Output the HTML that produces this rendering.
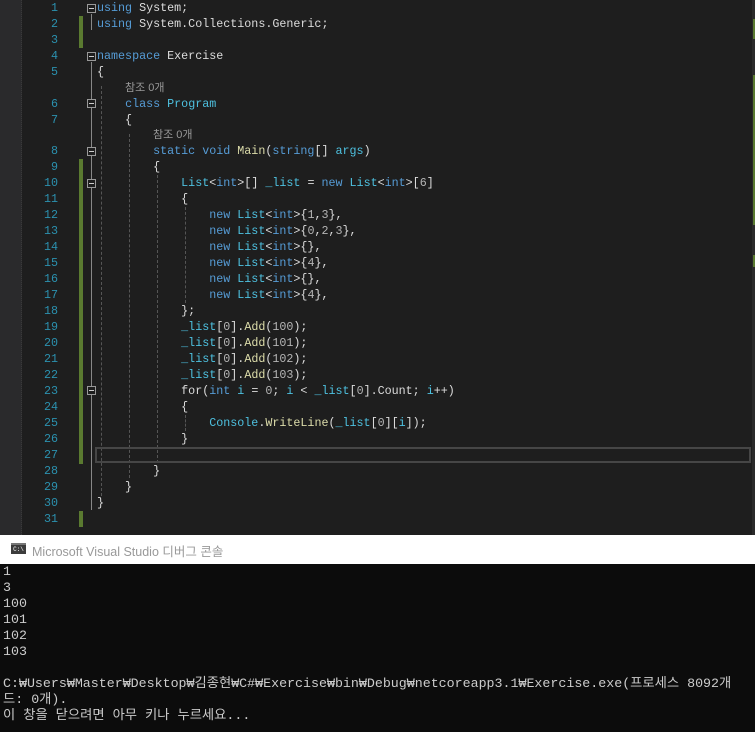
<!DOCTYPE html>
<html><head><meta charset="utf-8"><style>
*{margin:0;padding:0;box-sizing:border-box}
body{width:755px;height:732px;overflow:hidden;background:#1e1e1e;position:relative;font-family:"Liberation Mono","Noto Sans CJK KR",monospace}
#ed{position:absolute;left:0;top:0;width:755px;height:535px;background:#1e1e1e}
#lm{position:absolute;left:0;top:0;width:22px;height:535px;background:#2a2a2c;border-right:1px dotted #3a3a3a}
.l{position:absolute;left:0;height:16px;line-height:16px;font-size:11.7px;white-space:pre;color:#dcdcdc}
.n{position:absolute;width:58px;text-align:right;color:#2b91af;height:16px;line-height:16px;font-size:11.7px}
.t{position:absolute;left:97px;height:16px;line-height:16px;font-size:11.7px;white-space:pre;color:#dcdcdc}
.k{color:#569cd6}.ty{color:#4ec1e0}.m{color:#dcdcaa}.g{color:#b5b5b5}
.lens{color:#999;font-family:"Liberation Sans","Noto Sans CJK KR",sans-serif;font-size:11px}
.bar{position:absolute;left:79px;width:4px;background:#5a7a30}
.box{position:absolute;left:87px;width:9px;height:9px;border:1px solid #999;background:#1e1e1e}
.box:after{content:"";position:absolute;left:1px;top:3px;width:5px;height:1px;background:#ccc}
.vl{position:absolute;width:1px;background:#888}
.ig{position:absolute;width:0;border-left:1px dashed #555}
#con{position:absolute;left:0;top:535px;width:755px;height:197px;background:#0c0c0c}
#tb{position:absolute;left:0;top:0;width:755px;height:29px;background:#fff}
#tb span{position:absolute;left:32px;top:6px;font-family:"Liberation Sans","Noto Sans CJK KR",sans-serif;font-size:12.5px;color:#999}
#ico{position:absolute;left:11px;top:8px;width:15px;height:11px;background:#3c3c3c;border-top:2px solid #777;color:#fff;font-size:6px;line-height:9px;text-align:center}
.c{position:absolute;left:3px;height:16px;line-height:16px;font-size:13.3px;color:#ccc;white-space:pre}
</style></head><body>
<div id="ed">
<div id="lm"></div>
<div class="bar" style="top:16px;height:32px"></div>
<div class="bar" style="top:159px;height:305px"></div>
<div class="bar" style="top:511px;height:16px"></div>
<div style="position:absolute;left:752px;top:0;width:3px;height:535px;background:#2a2a2a"></div>
<div style="position:absolute;left:753px;top:19px;width:2px;height:20px;background:#5a7a30"></div>
<div style="position:absolute;left:753px;top:75px;width:2px;height:150px;background:#5a7a30"></div>
<div style="position:absolute;left:753px;top:255px;width:2px;height:12px;background:#5a7a30"></div>
<!-- outline lines -->
<div class="vl" style="left:91px;top:14px;height:16px"></div>
<div class="vl" style="left:91px;top:62px;height:448px"></div>
<div class="ig" style="left:101px;top:86px;height:410px"></div>
<div class="ig" style="left:129px;top:134px;height:344px"></div>
<div class="ig" style="left:157px;top:175px;height:288px"></div>
<div class="ig" style="left:185px;top:207px;height:96px"></div>
<div class="ig" style="left:185px;top:415px;height:16px"></div>
<div class="box" style="top:4px"></div>
<div class="box" style="top:52px"></div>
<div class="box" style="top:99px"></div>
<div class="box" style="top:147px"></div>
<div class="box" style="top:179px"></div>
<div class="box" style="top:386px"></div>
<div style="position:absolute;left:95px;top:447px;width:656px;height:16px;border:2px solid #464646"></div>

<div class="n" style="top:0">1</div><div class="t" style="top:0"><span class="k">using</span> System;</div>
<div class="n" style="top:16px">2</div><div class="t" style="top:16px"><span class="k">using</span> System.Collections.Generic;</div>
<div class="n" style="top:32px">3</div>
<div class="n" style="top:48px">4</div><div class="t" style="top:48px"><span class="k">namespace</span> Exercise</div>
<div class="n" style="top:64px">5</div><div class="t" style="top:64px">{</div>
<div class="t lens" style="top:80px;left:125px">참조 0개</div>
<div class="n" style="top:96px">6</div><div class="t" style="top:96px">    <span class="k">class</span> <span class="ty">Program</span></div>
<div class="n" style="top:112px">7</div><div class="t" style="top:112px">    {</div>
<div class="t lens" style="top:127px;left:153px">참조 0개</div>
<div class="n" style="top:143px">8</div><div class="t" style="top:143px">        <span class="k">static void</span> <span class="m">Main</span>(<span class="k">string</span>[] <span class="ty">args</span>)</div>
<div class="n" style="top:159px">9</div><div class="t" style="top:159px">        {</div>
<div class="n" style="top:175px">10</div><div class="t" style="top:175px">            <span class="ty">List</span>&lt;<span class="k">int</span>&gt;[] <span class="ty">_list</span> = <span class="k">new</span> <span class="ty">List</span>&lt;<span class="k">int</span>&gt;[<span class="g">6</span>]</div>
<div class="n" style="top:191px">11</div><div class="t" style="top:191px">            {</div>
<div class="n" style="top:207px">12</div><div class="t" style="top:207px">                <span class="k">new</span> <span class="ty">List</span>&lt;<span class="k">int</span>&gt;{<span class="g">1</span>,<span class="g">3</span>},</div>
<div class="n" style="top:223px">13</div><div class="t" style="top:223px">                <span class="k">new</span> <span class="ty">List</span>&lt;<span class="k">int</span>&gt;{<span class="g">0</span>,<span class="g">2</span>,<span class="g">3</span>},</div>
<div class="n" style="top:239px">14</div><div class="t" style="top:239px">                <span class="k">new</span> <span class="ty">List</span>&lt;<span class="k">int</span>&gt;{},</div>
<div class="n" style="top:255px">15</div><div class="t" style="top:255px">                <span class="k">new</span> <span class="ty">List</span>&lt;<span class="k">int</span>&gt;{<span class="g">4</span>},</div>
<div class="n" style="top:271px">16</div><div class="t" style="top:271px">                <span class="k">new</span> <span class="ty">List</span>&lt;<span class="k">int</span>&gt;{},</div>
<div class="n" style="top:287px">17</div><div class="t" style="top:287px">                <span class="k">new</span> <span class="ty">List</span>&lt;<span class="k">int</span>&gt;{<span class="g">4</span>},</div>
<div class="n" style="top:303px">18</div><div class="t" style="top:303px">            };</div>
<div class="n" style="top:319px">19</div><div class="t" style="top:319px">            <span class="ty">_list</span>[<span class="g">0</span>].<span class="m">Add</span>(<span class="g">100</span>);</div>
<div class="n" style="top:335px">20</div><div class="t" style="top:335px">            <span class="ty">_list</span>[<span class="g">0</span>].<span class="m">Add</span>(<span class="g">101</span>);</div>
<div class="n" style="top:351px">21</div><div class="t" style="top:351px">            <span class="ty">_list</span>[<span class="g">0</span>].<span class="m">Add</span>(<span class="g">102</span>);</div>
<div class="n" style="top:367px">22</div><div class="t" style="top:367px">            <span class="ty">_list</span>[<span class="g">0</span>].<span class="m">Add</span>(<span class="g">103</span>);</div>
<div class="n" style="top:383px">23</div><div class="t" style="top:383px">            <span>for</span>(<span class="k">int</span> <span class="ty">i</span> = <span class="g">0</span>; <span class="ty">i</span> &lt; <span class="ty">_list</span>[<span class="g">0</span>].Count; <span class="ty">i</span>++)</div>
<div class="n" style="top:399px">24</div><div class="t" style="top:399px">            {</div>
<div class="n" style="top:415px">25</div><div class="t" style="top:415px">                <span class="ty">Console</span>.<span class="m">WriteLine</span>(<span class="ty">_list</span>[<span class="g">0</span>][<span class="ty">i</span>]);</div>
<div class="n" style="top:431px">26</div><div class="t" style="top:431px">            }</div>
<div class="n" style="top:447px">27</div>
<div class="n" style="top:463px">28</div><div class="t" style="top:463px">        }</div>
<div class="n" style="top:479px">29</div><div class="t" style="top:479px">    }</div>
<div class="n" style="top:495px">30</div><div class="t" style="top:495px">}</div>
<div class="n" style="top:511px">31</div>
</div>
<div id="con">
<div id="tb"><div id="ico">C:\</div><span>Microsoft Visual Studio 디버그 콘솔</span></div>
<div class="c" style="top:29px">1</div>
<div class="c" style="top:45px">3</div>
<div class="c" style="top:61px">100</div>
<div class="c" style="top:77px">101</div>
<div class="c" style="top:93px">102</div>
<div class="c" style="top:109px">103</div>
<div class="c" style="top:141px">C:₩Users₩Master₩Desktop₩김종현₩C#₩Exercise₩bin₩Debug₩netcoreapp3.1₩Exercise.exe(프로세스 8092개</div>
<div class="c" style="top:157px">드: 0개).</div>
<div class="c" style="top:173px">이 창을 닫으려면 아무 키나 누르세요...</div>
</div>
</body></html>
